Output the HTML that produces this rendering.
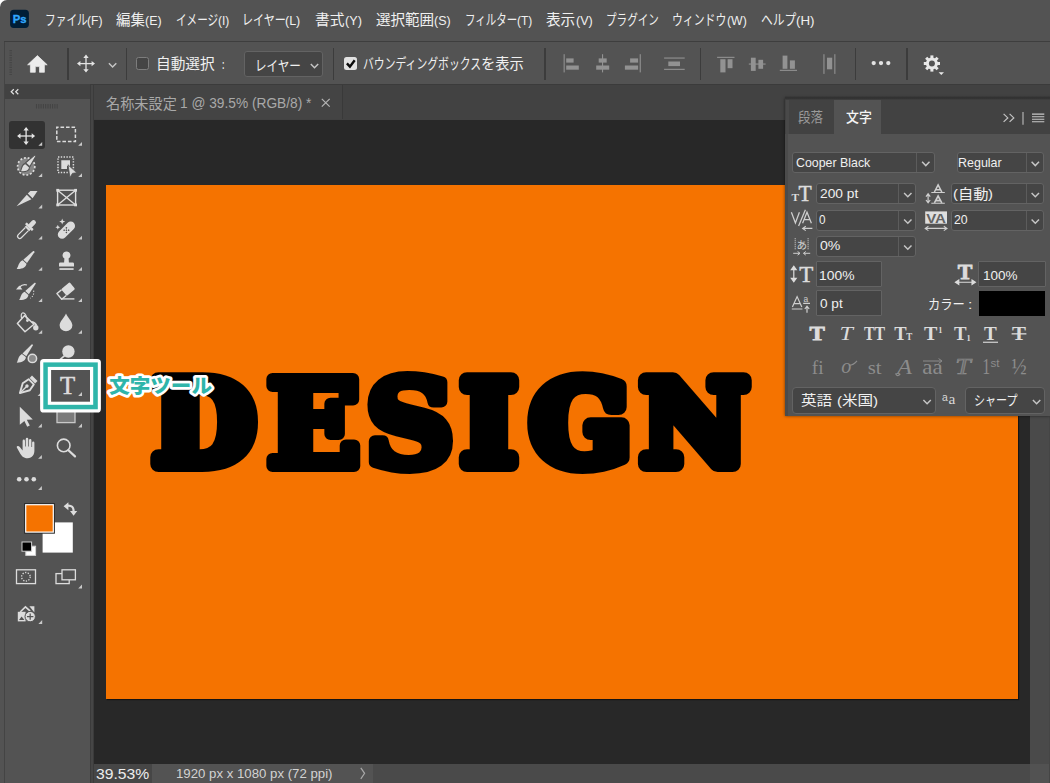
<!DOCTYPE html>
<html lang="ja">
<head>
<meta charset="utf-8">
<title>Photoshop 文字ツール</title>
<style>
*{box-sizing:border-box;margin:0;padding:0}
html,body{width:1050px;height:783px;overflow:hidden;background:#fff}
body{position:relative;font-family:"Liberation Sans","Noto Sans CJK JP",sans-serif;color:#e6e6e6;font-size:13px}
#win{position:absolute;left:0;top:0;width:1050px;height:783px;background:#535353;border-top-left-radius:7px;overflow:hidden}
#win div{position:absolute}
.t{position:absolute;white-space:nowrap;transform-origin:0 50%;display:block}
#optline{left:4px;top:41px;width:1046px;height:1px;background:#3e3e3e}
#optbar{left:5px;top:42px;width:1045px;height:42.5px;background:#535353}
.vsep{width:1.2px;background:#3c3c3c;top:48px;height:31.7px}
#tabbar{left:90px;top:84px;width:960px;height:36px;background:#424242}
#doctab{left:93.6px;top:85.4px;width:249px;height:34px;background:#444;border-right:1.2px solid #393939}
#canvas{left:93px;top:120px;width:937px;height:644px;background:#282828}
#art{left:106px;top:185px;width:912px;height:514px;background:#f57300;box-shadow:1px 1px 1px #141414}
#vscroll{left:1030px;top:120px;width:20px;height:663px;background:#4a4a4a}
#status{left:93px;top:764px;width:937px;height:19px;background:#4a4a4a}
#stzoom{left:93px;top:764px;width:59px;height:19px;background:#464646}
#stinfo{left:152px;top:764px;width:221px;height:19px;background:#535353}
#leftedge{left:4px;top:42px;width:1px;height:741px;background:#444}
#toolhdr{left:5px;top:84px;width:85px;height:15px;background:#424242}
#tools{left:5px;top:99px;width:85px;height:684px;background:#535353}
#toolgap{left:90px;top:85px;width:3.6px;height:698px;background:#464646;border-left:1px solid #3b3b3b;border-right:.9px solid #3b3b3b}
#toolsel{left:9px;top:121px;width:36px;height:28px;background:#323232;border-radius:3px}
#panel{left:785px;top:98px;width:265px;height:318px;background:#535353;box-shadow:0 0 3px rgba(0,0,0,.55)}
#ptabs{left:785px;top:98px;width:265px;height:36px;background:#424242}
#ptab{left:834px;top:98px;width:47px;height:37px;background:#535353}
#pedge{left:785px;top:134px;width:3px;height:282px;background:#4b4b4b}
.fld{background:#454545;border:1px solid #636363;border-radius:3px}
.fdiv{width:1px;background:#5c5c5c}
.cb{left:136px;top:57px;width:13px;height:13px;border:1px solid #7d7d7d;border-radius:2.5px;background:#454545}
.cbc{left:344px;top:57px;width:13px;height:13px;border-radius:2.5px;background:#e2e2e2}
#hl1{left:40px;top:359px;width:61px;height:53.5px;background:#fff;border-radius:3.5px}
#hl2{left:43.3px;top:362.4px;width:54.5px;height:47px;background:#2fb5aa}
#hl3{left:47.8px;top:366.9px;width:45.4px;height:38px;background:#fff}
#hl4{left:51px;top:370px;width:39px;height:31.7px;background:#535353}
svg{position:absolute;left:0;top:0}
</style>
</head>
<body>
<div id="win">
<div id="optline"></div>
<div id="optbar"></div>
<div id="tabbar"></div>
<div id="doctab"></div>
<div style="left:90px;top:84.4px;width:960px;height:1.1px;background:#3b3b3b"></div>
<div id="canvas"></div>
<div id="art"></div>
<div id="vscroll"></div>
<div id="status"></div>
<div id="stzoom"></div>
<div id="stinfo"></div>
<div style="left:1030px;top:764px;width:19px;height:19px;background:#525252"></div>
<div style="left:1049px;top:120px;width:1px;height:663px;background:#454545"></div>
<div id="leftedge"></div>
<div id="toolhdr"></div>
<div id="tools"></div>
<div id="toolgap"></div>
<div id="toolsel"></div>
<div class="vsep" style="left:67.4px"></div>
<div class="vsep" style="left:125.7px"></div>
<div class="vsep" style="left:332.8px"></div>
<div class="vsep" style="left:544.4px"></div>
<div class="vsep" style="left:699.8px"></div>
<div class="vsep" style="left:854.7px"></div>
<div class="vsep" style="left:906.4px"></div>
<div class="cb"></div>
<div class="cbc"></div>
<div class="fld" style="left:244px;top:51px;width:79px;height:26px"></div>
<style>.t{position:absolute;white-space:nowrap;display:block;height:22px;line-height:22px}.r{display:inline-block;white-space:pre;vertical-align:baseline}.r>span{display:inline-block;transform-origin:0 50%;white-space:pre}</style><div id="panel"></div>
<div id="ptabs"></div>
<div id="ptab"></div>
<div id="pedge"></div>
<div style="left:785px;top:96.4px;width:265px;height:3.6px;background:linear-gradient(#3e3e3e,#313131 40%,#343434 65%,#424242)"></div>
<div style="left:786px;top:100px;width:2.8px;height:34px;background:#494949"></div>
<div class="fld" style="left:791.5px;top:151.5px;width:143px;height:21px"></div>
<div class="fdiv" style="left:916px;top:152.5px;height:19px"></div>
<div class="fld" style="left:957px;top:151.5px;width:86.5px;height:21px"></div>
<div class="fdiv" style="left:1025.5px;top:152.5px;height:19px"></div>
<div class="fld" style="left:816px;top:183px;width:100px;height:21px"></div>
<div class="fdiv" style="left:898px;top:184px;height:19px"></div>
<div class="fld" style="left:951px;top:183px;width:92.5px;height:21px"></div>
<div class="fdiv" style="left:1025.5px;top:184px;height:19px"></div>
<div class="fld" style="left:816px;top:209.5px;width:100px;height:21px"></div>
<div class="fdiv" style="left:898px;top:210.5px;height:19px"></div>
<div class="fld" style="left:951px;top:209.5px;width:92.5px;height:21px"></div>
<div class="fdiv" style="left:1025.5px;top:210.5px;height:19px"></div>
<div class="fld" style="left:816px;top:235.5px;width:100px;height:21px"></div>
<div class="fdiv" style="left:898px;top:236.5px;height:19px"></div>
<div class="fld" style="left:815.8px;top:261.3px;width:66.4px;height:26px;border-radius:1px;border-width:1.2px"></div>
<div class="fld" style="left:978.4px;top:261.3px;width:67.2px;height:26px;border-radius:1px;border-width:1.2px"></div>
<div class="fld" style="left:815.8px;top:290.4px;width:66.4px;height:25.4px;border-radius:1px;border-width:1.2px"></div>
<div style="left:979px;top:291px;width:66px;height:24.5px;background:#000"></div>
<div class="fld" style="left:791.5px;top:386.5px;width:144px;height:27px;border-radius:4px"></div>
<div class="fld" style="left:964.5px;top:386.5px;width:80px;height:27px;border-radius:4px"></div>
<span class="t" style="left:44.60px;top:9.1px;font-size:14.4px;color:#f0f0f0;"><span class="r" style="width:42.79px;position:relative;top:.3px;"><span style="transform:scaleX(0.7431)">ファイル</span></span><span class="r" style="width:15.46px;font-size:0.86em;"><span style="transform:scaleX(0.9778)">(F)</span></span></span>
<span class="t" style="left:116.40px;top:9.1px;font-size:14.4px;color:#f0f0f0;"><span class="r" style="width:28.87px;position:relative;top:.3px;"><span style="transform:scaleX(1.0025)">編集</span></span><span class="r" style="width:16.54px;font-size:0.86em;"><span style="transform:scaleX(1.0025)">(E)</span></span></span>
<span class="t" style="left:175.70px;top:9.1px;font-size:14.4px;color:#f0f0f0;"><span class="r" style="width:42.11px;position:relative;top:.3px;"><span style="transform:scaleX(0.7351)">イメージ</span></span><span class="r" style="width:11.30px;font-size:0.86em;"><span style="transform:scaleX(0.9672)">(I)</span></span></span>
<span class="t" style="left:241.60px;top:9.1px;font-size:14.4px;color:#f0f0f0;"><span class="r" style="width:43.86px;position:relative;top:.3px;"><span style="transform:scaleX(0.7675)">レイヤー</span></span><span class="r" style="width:15.27px;font-size:0.86em;"><span style="transform:scaleX(1.0099)">(L)</span></span></span>
<span class="t" style="left:315.30px;top:9.1px;font-size:14.4px;color:#f0f0f0;"><span class="r" style="width:29.54px;position:relative;top:.3px;"><span style="transform:scaleX(1.0259)">書式</span></span><span class="r" style="width:16.93px;font-size:0.86em;"><span style="transform:scaleX(1.0259)">(Y)</span></span></span>
<span class="t" style="left:376.20px;top:9.1px;font-size:14.4px;color:#f0f0f0;"><span class="r" style="width:58.15px;position:relative;top:.3px;"><span style="transform:scaleX(1.0099)">選択範囲</span></span><span class="r" style="width:16.66px;font-size:0.86em;"><span style="transform:scaleX(1.0099)">(S)</span></span></span>
<span class="t" style="left:464.55px;top:9.1px;font-size:14.4px;color:#f0f0f0;"><span class="r" style="width:52.32px;position:relative;top:.3px;"><span style="transform:scaleX(0.7300)">フィルター</span></span><span class="r" style="width:15.19px;font-size:0.86em;"><span style="transform:scaleX(0.9606)">(T)</span></span></span>
<span class="t" style="left:546.30px;top:9.1px;font-size:14.4px;color:#f0f0f0;"><span class="r" style="width:29.26px;position:relative;top:.3px;"><span style="transform:scaleX(1.0160)">表示</span></span><span class="r" style="width:16.76px;font-size:0.86em;"><span style="transform:scaleX(1.0160)">(V)</span></span></span>
<span class="t" style="left:605.70px;top:9.1px;font-size:14.4px;color:#f0f0f0;"><span class="r" style="width:52.84px;position:relative;top:.3px;"><span style="transform:scaleX(0.7342)">プラグイン</span></span></span>
<span class="t" style="left:672.25px;top:9.1px;font-size:14.4px;color:#f0f0f0;"><span class="r" style="width:54.32px;position:relative;top:.3px;"><span style="transform:scaleX(0.7548)">ウィンドウ</span></span><span class="r" style="width:19.80px;font-size:0.86em;"><span style="transform:scaleX(0.9931)">(W)</span></span></span>
<span class="t" style="left:760.75px;top:9.1px;font-size:14.4px;color:#f0f0f0;"><span class="r" style="width:35.40px;position:relative;top:.3px;"><span style="transform:scaleX(0.8198)">ヘルプ</span></span><span class="r" style="width:18.54px;font-size:0.86em;"><span style="transform:scaleX(1.0786)">(H)</span></span></span>
<span class="t" style="left:156.10px;top:53.0px;font-size:14.4px;color:#f0f0f0;"><span class="r" style="width:58.70px;position:relative;top:.3px;"><span style="transform:scaleX(1.0195)">自動選択</span></span></span>
<span class="t" style="left:221.65px;top:53.0px;font-size:14.4px;color:#f0f0f0;font-weight:700;"><span class="r" style="width:2.46px;font-size:0.9em;"><span style="transform:scaleX(0.5676)">:</span></span></span>
<span class="t" style="left:254.60px;top:54.4px;font-size:14.4px;color:#f0f0f0;"><span class="r" style="width:45.94px;position:relative;top:.3px;"><span style="transform:scaleX(0.8040)">レイヤー</span></span></span>
<span class="t" style="left:363.35px;top:53.0px;font-size:14.4px;color:#f0f0f0;"><span class="r" style="width:118.12px;position:relative;top:.3px;"><span style="transform:scaleX(0.7530)">バウンディングボックス</span></span><span class="r" style="width:42.79px;position:relative;top:.3px;"><span style="transform:scaleX(0.9908)">を表示</span></span></span>
<span class="t" style="left:105.50px;top:92.4px;font-size:14.4px;color:#a9a9a9;"><span class="r" style="width:74.74px;position:relative;top:.3px;"><span style="transform:scaleX(0.9840)">名称未設定 </span></span><span class="r" style="width:131.46px;font-size:0.97em;"><span style="transform:scaleX(0.9840)">1 @ 39.5% (RGB/8) *</span></span></span>
<span class="t" style="left:96.40px;top:763.0px;font-size:16px;color:#ececec;"><span class="r" style="width:53.23px;font-size:0.97em;"><span style="transform:scaleX(1.0115)">39.53%</span></span></span>
<span class="t" style="left:175.75px;top:763.0px;font-size:13.6px;color:#d2d2d2;"><span class="r" style="width:156.52px;font-size:0.97em;"><span style="transform:scaleX(1.0022)">1920 px x 1080 px (72 ppi)</span></span></span>
<span class="t" style="left:797.60px;top:106.4px;font-size:13.8px;color:#9a9a9a;"><span class="r" style="width:25.00px;position:relative;top:.3px;"><span style="transform:scaleX(0.9060)">段落</span></span></span>
<span class="t" style="left:846.00px;top:106.4px;font-size:13.8px;color:#f4f4f4;font-weight:500;"><span class="r" style="width:25.81px;position:relative;top:.3px;"><span style="transform:scaleX(0.9354)">文字</span></span></span>
<span class="t" style="left:795.75px;top:151.5px;font-size:13.6px;color:#f0f0f0;"><span class="r" style="width:74.30px;font-size:0.97em;"><span style="transform:scaleX(0.9385)">Cooper Black</span></span></span>
<span class="t" style="left:958.35px;top:151.5px;font-size:13.6px;color:#f0f0f0;"><span class="r" style="width:43.72px;font-size:0.97em;"><span style="transform:scaleX(0.9465)">Regular</span></span></span>
<span class="t" style="left:820.25px;top:183.1px;font-size:13.6px;color:#f0f0f0;"><span class="r" style="width:38.30px;font-size:0.97em;"><span style="transform:scaleX(1.0444)">200 pt</span></span></span>
<span class="t" style="left:952.95px;top:183.4px;font-size:13.6px;color:#f0f0f0;"><span class="r" style="width:4.94px;font-size:0.97em;"><span style="transform:scaleX(1.1222)">(</span></span><span class="r" style="width:30.51px;position:relative;top:.3px;"><span style="transform:scaleX(1.1222)">自動</span></span><span class="r" style="width:4.94px;font-size:0.97em;"><span style="transform:scaleX(1.1222)">)</span></span></span>
<span class="t" style="left:819.25px;top:209.1px;font-size:13.6px;color:#f0f0f0;"><span class="r" style="width:6.54px;font-size:0.97em;"><span style="transform:scaleX(0.8904)">0</span></span></span>
<span class="t" style="left:954.15px;top:209.1px;font-size:13.6px;color:#f0f0f0;"><span class="r" style="width:13.70px;font-size:0.97em;"><span style="transform:scaleX(0.9339)">20</span></span></span>
<span class="t" style="left:819.80px;top:235.3px;font-size:13.6px;color:#f0f0f0;"><span class="r" style="width:20.43px;font-size:0.97em;"><span style="transform:scaleX(1.0716)">0%</span></span></span>
<span class="t" style="left:819.30px;top:264.6px;font-size:13.6px;color:#f0f0f0;"><span class="r" style="width:35.46px;font-size:0.97em;"><span style="transform:scaleX(1.0511)">100%</span></span></span>
<span class="t" style="left:983.35px;top:264.6px;font-size:13.6px;color:#f0f0f0;"><span class="r" style="width:34.55px;font-size:0.97em;"><span style="transform:scaleX(1.0243)">100%</span></span></span>
<span class="t" style="left:820.45px;top:293.0px;font-size:13.6px;color:#f0f0f0;"><span class="r" style="width:22.70px;font-size:0.97em;"><span style="transform:scaleX(1.0319)">0 pt</span></span></span>
<span class="t" style="left:928.15px;top:293.5px;font-size:13.6px;color:#f0f0f0;"><span class="r" style="width:40.27px;position:relative;top:.3px;"><span style="transform:scaleX(0.9036)">カラー </span></span><span class="r" style="width:4.37px;font-size:0.97em;"><span style="transform:scaleX(1.1889)">:</span></span></span>
<span class="t" style="left:801.30px;top:389.9px;font-size:13.6px;color:#f0f0f0;"><span class="r" style="width:35.55px;position:relative;top:.3px;"><span style="transform:scaleX(1.1480)">英語 </span></span><span class="r" style="width:5.06px;font-size:0.97em;"><span style="transform:scaleX(1.1480)">(</span></span><span class="r" style="width:31.21px;position:relative;top:.3px;"><span style="transform:scaleX(1.1480)">米国</span></span><span class="r" style="width:5.06px;font-size:0.97em;"><span style="transform:scaleX(1.1480)">)</span></span></span>
<span class="t" style="left:973.85px;top:389.9px;font-size:13.6px;color:#f0f0f0;"><span class="r" style="width:43.52px;position:relative;top:.3px;"><span style="transform:scaleX(0.8125)">シャープ</span></span></span>
<svg width="1050" height="783" viewBox="0 0 1050 783">
<defs>
<path id="tri" d="M0 3.8 L3.8 0 L3.8 3.8 Z" fill="#c9c9c9"/>
<g id="mv" fill="#e4e4e4" stroke="none">
<rect x="-6.5" y="-0.65" width="13" height="1.3"/><rect x="-0.65" y="-6.5" width="1.3" height="13"/>
<path d="M-9 0 L-5.6 -2.7 L-5.6 2.7Z M9 0 L5.6 -2.7 L5.6 2.7Z M0 -9 L-2.7 -5.6 L2.7 -5.6Z M0 9 L-2.7 5.6 L2.7 5.6Z"/>
</g>
<path id="chev" d="M-3.7 -2 L0 1.8 L3.7 -2" fill="none" stroke="#c6c6c6" stroke-width="1.45"/>
</defs>
<!-- Ps logo -->
<rect x="10.1" y="9.7" width="18.8" height="18.2" rx="3.6" fill="#001e36"/>
<text x="12.8" y="23.1" font-family="Liberation Sans, sans-serif" font-weight="700" font-size="11.2" fill="#31a8ff" stroke="#31a8ff" stroke-width=".35" textLength="13.8" lengthAdjust="spacingAndGlyphs">Ps</text>
<!-- options bar grip -->
<path d="M10.7 50 V75" stroke="#464646" stroke-width="2.6" stroke-dasharray="1.2 1.2"/>
<!-- home -->
<path d="M37.4 55.6 L47.2 64.8 L44.4 64.8 L44.4 72.3 L39.5 72.3 L39.5 66.6 L35.3 66.6 L35.3 72.3 L30.4 72.3 L30.4 64.8 L27.6 64.8 Z" fill="#ececec" stroke="#ececec" stroke-width=".7" stroke-linejoin="round"/>
<use href="#mv" x="86" y="63.6"/>
<use href="#chev" x="112.6" y="65.2"/>
<use href="#chev" x="314.5" y="66" />
<!-- check mark -->
<path d="M346.9 63.4 L349.9 66.6 L354.7 60.2" fill="none" stroke="#0a0a0a" stroke-width="2.4"/>
<!-- align icons -->
<g fill="#929292">
<rect x="563.6" y="54.2" width="1.1" height="18.2"/><rect x="566.2" y="58.4" width="7.4" height="4.2"/><rect x="566.2" y="65.5" width="12.6" height="4.2"/>
<rect x="602" y="54.2" width="1.1" height="18.2"/><rect x="598.7" y="58.4" width="8" height="4.2"/><rect x="596.2" y="65.5" width="13" height="4.2"/>
<rect x="639.7" y="54.2" width="1.1" height="18.2"/><rect x="630.1" y="58.4" width="8" height="4.2"/><rect x="624.9" y="65.5" width="13.2" height="4.2"/>
<rect x="664.1" y="57.5" width="20.6" height="1.1"/><rect x="664.1" y="68.8" width="20.6" height="1.1"/><rect x="668.3" y="61.5" width="11.7" height="4.6"/>
<rect x="717.1" y="56.8" width="17.4" height="1.1"/><rect x="720.3" y="59.2" width="5.2" height="13.2"/><rect x="727.6" y="59.2" width="4.9" height="9"/>
<rect x="748.8" y="63.5" width="16.8" height="1.1"/><rect x="750.9" y="57.7" width="4.8" height="13.2"/><rect x="758.4" y="59.8" width="4.7" height="9"/>
<rect x="779.8" y="69.8" width="17.2" height="1.1"/><rect x="782.6" y="55.6" width="4.8" height="13.2"/><rect x="789.9" y="60.4" width="5" height="8.4"/>
<rect x="823.4" y="54.2" width="1.1" height="19.7"/><rect x="834.3" y="54.2" width="1.1" height="19.7"/><rect x="827" y="57.7" width="5.2" height="11.6"/>
</g>
<g fill="#e2e2e2"><circle cx="873.7" cy="63.1" r="2.15"/><circle cx="881" cy="63.1" r="2.15"/><circle cx="888.3" cy="63.1" r="2.15"/></g>
<!-- gear -->
<g transform="translate(931.9 63.5)" fill="#e8e8e8">
<circle r="4.5" fill="none" stroke="#e8e8e8" stroke-width="3"/>
<g id="teeth"><rect x="-1.5" y="-8.1" width="3" height="16.2"/><rect x="-8.1" y="-1.5" width="16.2" height="3"/></g>
<use href="#teeth" transform="rotate(45)"/>
<circle r="3" fill="#535353"/>
</g>
<path d="M938.6 72.2 L944 72.2 L941.3 75Z" fill="#e8e8e8"/>
<!-- tab close -->
<path d="M321.8 98.9 L329.7 106.6 M329.7 98.9 L321.8 106.6" stroke="#b4b4b4" stroke-width="1.25"/>
<!-- tool header -->
<path d="M13.8 89.3 L11.2 91.8 L13.8 94.3 M18.3 89.3 L15.7 91.8 L18.3 94.3" fill="none" stroke="#e0e0e0" stroke-width="1.2"/>
<path d="M36.5 104 V108.6 M38.8 104 V108.6 M41.1 104 V108.6 M43.4 104 V108.6 M45.7 104 V108.6 M48 104 V108.6 M50.3 104 V108.6 M52.6 104 V108.6 M54.9 104 V108.6 M57.2 104 V108.6" stroke="#444" stroke-width="1.1"/>
<!-- status chevron -->
<path d="M360.8 767.8 L364.6 773.3 L360.8 778.8" fill="none" stroke="#a8a8a8" stroke-width="1.2"/>
<!-- TOOLS -->
<defs><g id="br"><path d="M-0.8 0.7 Q0 -0.5 0.8 0.7 L2.5 13.7 L-2.5 13.7 Z"/><path d="M-2.6 14.6 L2.6 14.6 C4.6 17.2 3.4 21.4 -1.2 25 C-1.6 21.6 -4.4 19 -2.6 14.6 Z"/></g></defs>

<g fill="#dcdcdc" stroke="none">
<use href="#mv" x="26.1" y="136"/>
<use href="#tri" x="38.4" y="142"/>
<!-- marquee -->
<rect x="56.8" y="127.3" width="18.6" height="14.2" fill="none" stroke="#dcdcdc" stroke-width="1.5" stroke-dasharray="3.6 1.9" stroke-dashoffset="1.8"/>
<use href="#tri" x="78.2" y="142"/>
<!-- quick selection -->
<circle cx="26.2" cy="166.4" r="8.6" fill="#858585" stroke="#dcdcdc" stroke-width="1.7" stroke-dasharray="1.9 1.9"/>
<use href="#br" transform="translate(35.4 155.4) rotate(39.5) scale(1.12 .88)" stroke="#535353" stroke-width="1"/>
<use href="#tri" x="38.4" y="173.2"/>
<!-- object selection -->
<rect x="58" y="157" width="15.4" height="15.4" fill="none" stroke="#dcdcdc" stroke-width="1.5" stroke-dasharray="1.4 1.4"/>
<path d="M61.3 160.3 H70 V166 H67 V169 H61.3Z"/>
<path d="M68 164.8 L76.8 172.8 L72.5 173.3 L70 177.6 Z" stroke="#535353" stroke-width="0.8"/>
<use href="#tri" x="78.2" y="173.2"/>
<!-- slice -->
<path d="M16.6 206.2 L26.8 194.8 L31.4 199.2 Z"/>
<path d="M27.8 193.6 L30.4 191 L37.5 191 L32.6 198.2 Z"/>
<use href="#tri" x="38.4" y="204.6"/>
<!-- frame -->
<g fill="none" stroke="#dcdcdc" stroke-width="1.4"><rect x="57.6" y="190.2" width="18" height="14.8"/><path d="M57.6 190.2 L75.6 205 M75.6 190.2 L57.6 205"/></g>
<rect x="56.3" y="188.9" width="2.8" height="2.8"/><rect x="74.2" y="188.9" width="2.8" height="2.8"/><rect x="56.3" y="203.5" width="2.8" height="2.8"/><rect x="74.2" y="203.5" width="2.8" height="2.8"/>
<!-- eyedropper -->
<g transform="translate(26.6 229.4) rotate(45) scale(.94)"><rect x="-2.5" y="-13" width="5" height="9" rx="2.5"/><rect x="-5.2" y="-5.4" width="10.4" height="2.7" rx=".6"/><rect x="-3.3" y="-2.7" width="6.6" height="2.2"/><path d="M-2.3 -0.5 V10.2 Q-2.3 12.6 0 12.6 Q2.3 12.6 2.3 10.2 V-0.5" fill="none" stroke="#dcdcdc" stroke-width="1.3"/></g>
<use href="#tri" x="38.4" y="235.8"/>
<!-- healing -->
<g transform="translate(66.4 230.2) rotate(-45)"><rect x="-10.4" y="-4.3" width="20.8" height="8.6" rx="4.3"/><g fill="#535353"><circle cx="-1.6" cy="-1.6" r=".8"/><circle cx="1.6" cy="-1.6" r=".8"/><circle cx="-1.6" cy="1.6" r=".8"/><circle cx="1.6" cy="1.6" r=".8"/><circle cx="0" cy="0" r=".8"/></g></g>
<path d="M62.2 218.6 L63 220.8 L65.2 221.6 L63 222.4 L62.2 224.6 L61.4 222.4 L59.2 221.6 L61.4 220.8Z M57.8 224.8 L58.5 226.5 L60.2 227.2 L58.5 227.9 L57.8 229.6 L57.1 227.9 L55.4 227.2 L57.1 226.5Z"/>
<use href="#tri" x="78.2" y="235.8"/>
<!-- brush -->
<use href="#br" transform="translate(34.3 251.1) rotate(41.9)"/>
<use href="#tri" x="38.4" y="267"/>
<!-- stamp -->
<path d="M66.5 251.4 A3.9 3.9 0 0 1 68.6 258.6 L68.9 262.4 H72.6 Q74 262.4 74 263.8 V266.4 H59 V263.8 Q59 262.4 60.4 262.4 H64.1 L64.4 258.6 A3.9 3.9 0 0 1 66.5 251.4Z"/>
<rect x="59.4" y="268.2" width="14.2" height="1.7"/>
<use href="#tri" x="78.2" y="267"/>
<!-- history brush -->
<use href="#br" transform="translate(35.6 282.8) rotate(41) scale(.95)"/>
<path d="M16 289.6 L19.4 285.4 L22.4 289.6 Z"/>
<path d="M19.6 287 Q22.6 283.8 27 285" fill="none" stroke="#dcdcdc" stroke-width="1.2"/>
<path d="M33.6 290.6 Q34.6 295.4 30.2 298.2" fill="none" stroke="#dcdcdc" stroke-width="1.1" stroke-dasharray="1.2 1.6"/>
<use href="#tri" x="38.4" y="298.2"/>
<!-- eraser -->
<g transform="translate(65.6 291.2) rotate(-40)"><rect x="-2.2" y="-4.4" width="11" height="8.8" rx="1.2"/><path d="M-2.2 -3.7 H-8.2 V3.7 H-2.2" fill="none" stroke="#dcdcdc" stroke-width="1.4" stroke-linejoin="round"/></g>
<path d="M61.6 298.9 H74.4" fill="none" stroke="#dcdcdc" stroke-width="1.4"/>
<use href="#tri" x="78.2" y="298.2"/>
<!-- paint bucket -->
<path d="M24.6 315.6 L34 324.2 L25 331.8 L17.4 323.6 Z" fill="none" stroke="#dcdcdc" stroke-width="1.5" stroke-linejoin="round"/>
<path d="M21.6 318.4 Q20.4 313.6 23 312.8 Q25.6 312.6 27.4 319.6" fill="none" stroke="#dcdcdc" stroke-width="1.2"/>
<circle cx="27.4" cy="320.6" r="1.4"/>
<path d="M31.6 321.8 Q35.4 322.6 36.6 325.6" fill="none" stroke="#dcdcdc" stroke-width="1.6"/><circle cx="35.8" cy="327.8" r="2.7"/>
<use href="#tri" x="38.4" y="330"/>
<!-- drop -->
<path d="M66 313.4 C68 318 72.4 321.4 72.4 325.2 A6.4 6 0 0 1 59.6 325.2 C59.6 321.4 64 318 66 313.4Z"/>
<use href="#tri" x="78.2" y="330"/>
<!-- mixer brush -->
<use href="#br" transform="translate(32.6 344.4) rotate(38) scale(.97)"/>
<circle cx="32.4" cy="358.4" r="4.2" fill="#8a8a8a" stroke="#dcdcdc" stroke-width="1.5"/>
<!-- dodge -->
<circle cx="68.4" cy="351.5" r="6.2"/>
<path d="M64.6 355.6 L60 359.6" stroke="#dcdcdc" stroke-width="1.7"/>
<!-- pen -->
<g transform="translate(27.4 385.6) rotate(45)">
<path d="M-3.9 -10.4 H3.9 V-7 H-3.9Z"/>
<path d="M-3.7 -5.4 H3.7 L5 1.6 L0 10.6 L-5 1.6 Z" fill="none" stroke="#dcdcdc" stroke-width="1.9" stroke-linejoin="round"/>
<path d="M0 10.4 V1.6" stroke="#dcdcdc" stroke-width="1.3"/><circle cx="0" cy="0.6" r="1.7"/>
</g>
<use href="#tri" x="37.6" y="392.1"/>
<use href="#tri" x="78.2" y="392.1"/>
<!-- path select -->
<path d="M19.8 406.8 L32.8 419.4 L26.8 419.8 L29.8 425.6 L27.2 426.8 L24.4 421 L19.8 424.8 Z"/>
<use href="#tri" x="38.1" y="423.6"/>
<!-- rectangle -->
<rect x="57" y="406" width="18" height="16.6" fill="#7b7b7b" stroke="#c8c8c8" stroke-width="1.3"/>
<use href="#tri" x="78.2" y="423.6"/>
<!-- hand -->
<path d="M22.6 441 Q22.6 439.6 23.8 439.6 Q25 439.6 25 441 V446.4 H25.7 V439.2 Q25.7 437.8 27 437.8 Q28.3 437.8 28.3 439.2 V446.4 H29 V440.2 Q29 438.9 30.2 438.9 Q31.4 438.9 31.4 440.2 V447 H32.1 V442.8 Q32.1 441.6 33.2 441.6 Q34.4 441.6 34.4 442.8 V450.6 C34.4 454.6 32.4 458.2 27.6 458.2 C23.4 458.2 21.4 455.8 19.6 452.4 L16.8 447.6 Q16.4 446.4 17.6 446 Q18.8 445.8 19.8 447 L22.6 450.4 Z"/>
<use href="#tri" x="38.1" y="455"/>
<!-- zoom -->
<circle cx="63.7" cy="445.4" r="6.3" fill="none" stroke="#dcdcdc" stroke-width="1.6"/>
<path d="M68.4 450.2 L75 456.4" stroke="#dcdcdc" stroke-width="2.2" stroke-linecap="round"/>
<!-- dots -->
<circle cx="19.2" cy="479.2" r="2.3"/><circle cx="26.5" cy="479.2" r="2.3"/><circle cx="33.8" cy="479.2" r="2.3"/>
<use href="#tri" x="38.1" y="486.1"/>
</g>
<!-- swatches -->
<rect x="42.6" y="522.4" width="30.2" height="30.2" fill="#fff"/>
<rect x="24.1" y="503.1" width="30.8" height="30.6" fill="#2b2b2b"/>
<rect x="25.1" y="504.1" width="28.8" height="28.6" fill="#fff"/>
<rect x="26.3" y="505.3" width="26.4" height="26.2" fill="#f57300"/>
<!-- swap -->
<path d="M67.4 505.6 Q73.8 505 73.6 511.6" fill="none" stroke="#dcdcdc" stroke-width="2.2"/>
<path d="M63.6 506.2 L68.4 502.2 L68.4 510.2Z M70 511 L77.2 511 L73.6 515.8Z" fill="#dcdcdc"/>
<!-- default colors -->
<rect x="25.8" y="546.2" width="9.8" height="9.2" fill="#fff" stroke="#d0d0d0" stroke-width="1"/>
<rect x="22" y="542" width="9.6" height="9.2" fill="#000" stroke="#d0d0d0" stroke-width="1"/>
<!-- quick mask -->
<rect x="16.5" y="569.8" width="19" height="13.8" fill="none" stroke="#dcdcdc" stroke-width="1.3"/>
<circle cx="25.9" cy="576.8" r="4.3" fill="none" stroke="#dcdcdc" stroke-width="1.3" stroke-dasharray="1.3 1.4"/>
<!-- screen mode -->
<rect x="56" y="573.6" width="13.2" height="10" fill="#535353" stroke="#dcdcdc" stroke-width="1.3"/>
<rect x="62" y="569.8" width="13.4" height="10" fill="#535353" stroke="#dcdcdc" stroke-width="1.3"/>
<use href="#tri" x="78.2" y="584.6"/>
<!-- generate image -->
<g fill="#dcdcdc">
<path d="M19.6 611.4 L25.4 605.8 L30.8 610.6 L29.4 611.6 L25.4 608 L21 612.2Z"/>
<path d="M29.4 606.2 H34.4 V612.6 Z"/>
<path d="M17.8 611.8 H25.6 V621.4 H17.8Z"/>
<circle cx="30.2" cy="616.6" r="5.2" stroke="#535353" stroke-width="1"/>
<path d="M27 616.6 H33.4 M30.2 613.4 V619.8" stroke="#535353" stroke-width="1.2"/>
<path d="M19 620 L21.6 616.4 L24.4 620Z" fill="#535353"/>
</g>
<use href="#tri" x="38.4" y="620.1"/>
<!-- PANEL ICONS -->
<g fill="none" stroke="#c4c4c4" stroke-width="1.2">
<path d="M1003.6 113.9 L1007.8 117.9 L1003.6 121.9 M1009.6 113.9 L1013.8 117.9 L1009.6 121.9"/>
<path d="M1023 112 V124.8" stroke="#bdbdbd" stroke-width="1.1"/>
<path d="M1032 114.1 H1044.3 M1032 116.7 H1044.3 M1032 119.3 H1044.3 M1032 121.7 H1044.3" stroke="#c9c9c9" stroke-width="1.1"/>
</g>
<use href="#chev" x="925.8" y="163.8"/><use href="#chev" x="1035.3" y="163.8"/>
<use href="#chev" x="907.8" y="195"/><use href="#chev" x="1035.3" y="195"/>
<use href="#chev" x="907.8" y="221.5"/><use href="#chev" x="1035.3" y="221.5"/>
<use href="#chev" x="907.8" y="247.5"/>
<use href="#chev" x="927.1" y="402"/><use href="#chev" x="1036.6" y="402"/>
<g font-family="Liberation Serif, serif" fill="#dcdcdc">
<!-- size icon -->
<text x="791.4" y="200.6" font-size="10" font-weight="700" textLength="7.6" lengthAdjust="spacingAndGlyphs">T</text>
<text x="798.4" y="200.6" font-size="23.4" textLength="13.2" lengthAdjust="spacingAndGlyphs" stroke="#dcdcdc" stroke-width=".5">T</text>
<!-- vertical scale -->
<text x="799.2" y="281.8" font-size="23.4" textLength="14" lengthAdjust="spacingAndGlyphs" stroke="#dcdcdc" stroke-width=".5">T</text>
<!-- horizontal scale -->
<text x="957.8" y="279.4" font-size="21" font-weight="700" textLength="14.6" lengthAdjust="spacingAndGlyphs" stroke="#dcdcdc" stroke-width=".9">T</text>
<!-- style row -->
<g font-weight="700" font-size="19.2">
<text x="809.6" y="339.7" textLength="15.4" lengthAdjust="spacingAndGlyphs" stroke="#dcdcdc" stroke-width=".8">T</text>
<text x="839.6" y="339.7" font-style="italic" font-weight="400" textLength="13.4" lengthAdjust="spacingAndGlyphs">T</text>
<text x="864" y="339.7" textLength="21.2" lengthAdjust="spacingAndGlyphs">TT</text>
<text x="894.2" y="339.7" textLength="12.4" lengthAdjust="spacingAndGlyphs">T</text>
<text x="906.2" y="339.7" font-size="11" textLength="6" lengthAdjust="spacingAndGlyphs">T</text>
<text x="924" y="339.7" textLength="13.4" lengthAdjust="spacingAndGlyphs">T</text>
<text x="938.2" y="333" font-size="8.4">1</text>
<text x="954" y="339.7" textLength="12.6" lengthAdjust="spacingAndGlyphs">T</text>
<text x="966.4" y="341" font-size="8.4">1</text>
<text x="984" y="339.7" textLength="12.8" lengthAdjust="spacingAndGlyphs">T</text>
<text x="1012" y="339.7" textLength="14" lengthAdjust="spacingAndGlyphs">T</text>
</g>
<rect x="983" y="341.7" width="15" height="1.1"/>
<rect x="1011.6" y="333.2" width="14.8" height="1.3"/>
</g>
<!-- opentype row (dim) -->
<g font-family="Liberation Serif, serif" fill="#8c8c8c" font-size="19.6">
<text x="811.8" y="374" textLength="11.8" lengthAdjust="spacingAndGlyphs">fi</text>
<text x="841.2" y="373" font-style="italic" font-size="20">o</text>
<path d="M849 365.4 Q853.6 365 857 360.8" fill="none" stroke="#8c8c8c" stroke-width="1.1"/>
<text x="867.8" y="374" textLength="13.8" lengthAdjust="spacingAndGlyphs">st</text>
<text x="897" y="374.4" font-style="italic" font-size="21.4" textLength="15" lengthAdjust="spacingAndGlyphs">A</text>
<path d="M895.6 373.6 Q897.2 377.4 900.2 374" fill="none" stroke="#8c8c8c" stroke-width="1.3"/>
<text x="922.2" y="374" font-size="20.6" textLength="20.4" lengthAdjust="spacingAndGlyphs">aa</text>
<path d="M923 361 H941.6 M938.6 358.6 L942 361 L938.6 363.4" fill="none" stroke="#8c8c8c" stroke-width="1"/>
<text x="955.2" y="374" font-style="italic" font-size="22.6" fill="#6c6c6c" stroke="#8c8c8c" stroke-width=".7" textLength="15.4" lengthAdjust="spacingAndGlyphs">T</text>
<text x="982.2" y="374" font-size="22.4" textLength="8" lengthAdjust="spacingAndGlyphs">1</text>
<text x="990.4" y="367.4" font-size="11.6" font-family="Liberation Sans, sans-serif">st</text>
<text x="1011.6" y="374" font-size="22.4" textLength="15.2" lengthAdjust="spacingAndGlyphs">½</text>
</g>
<!-- leading icon -->
<g fill="none" stroke="#cfcfcf" stroke-width="1.1">
<path d="M928.1 194.6 V202 M926 196.6 L928.1 193.8 L930.2 196.6 M926 200 L928.1 202.8 L930.2 200" stroke-width="1.2"/>
<path d="M931.3 192.5 H944.8 M931.3 203.2 H944.8"/>
<path d="M934.4 192 L938.1 185 L941.8 192 M935.6 189.8 H940.6" stroke-width="1.6"/>
<path d="M934.4 202.8 L938.1 196 L941.8 202.8 M935.6 200.6 H940.6" stroke-width="1.6"/>
</g>
<!-- kerning icon -->
<g fill="none" stroke="#cfcfcf" stroke-width="1.25">
<path d="M791.4 212.2 L795.4 223 L799.4 212.2"/>
<path d="M805.4 209.8 L798.6 226"/>
<path d="M802.6 223.2 L807 212.2 L811.4 223.2 M804.2 219.6 H809.8"/>
<path d="M803 228.4 H812.4 M805.8 226.2 L802.6 228.4 L805.8 230.6" stroke-width="1.1"/>
</g>
<!-- tracking icon -->
<rect x="925.2" y="211.4" width="21.8" height="12.3" fill="#dedede"/>
<text x="926.2" y="222.6" font-family="Liberation Sans, sans-serif" font-weight="700" font-size="13" fill="#626262" textLength="19.8" lengthAdjust="spacingAndGlyphs">VA</text>
<path d="M926 228.4 H946.2 M928.4 226.2 L925.2 228.4 L928.4 230.6 M943.8 226.2 L947 228.4 L943.8 230.6" fill="none" stroke="#cfcfcf" stroke-width="1.1"/>
<!-- tsume icon -->
<text x="796.4" y="248.6" font-family="Noto Sans CJK JP, sans-serif" font-size="10.6" fill="#cfcfcf">あ</text>
<path d="M795.2 238.2 V249.6 M808.1 238.2 V249.6" stroke="#cfcfcf" stroke-width="1.1" stroke-dasharray="1 1"/>
<path d="M793.2 253.3 H799.6 M797.6 251.5 L800 253.3 L797.6 255.1 M810.2 253.3 H803.8 M805.8 251.5 L803.4 253.3 L805.8 255.1" fill="none" stroke="#cfcfcf" stroke-width="1"/>
<!-- vscale arrow -->
<path d="M793.8 268 V280 M791.4 269.6 L793.8 266.2 L796.2 269.6 Z M791.4 278.4 L793.8 281.8 L796.2 278.4 Z" fill="#dcdcdc" stroke="#dcdcdc" stroke-width="1.2"/>
<!-- hscale arrow -->
<path d="M956.6 282.2 H974.2 M958.8 280 L955.4 282.2 L958.8 284.4 Z M972 280 L975.4 282.2 L972 284.4 Z" fill="#dcdcdc" stroke="#dcdcdc" stroke-width="1.1"/>
<!-- baseline icon -->
<g fill="none" stroke="#cfcfcf" stroke-width="1.2">
<path d="M792.4 307 L797.1 296.6 L801.8 307 M794 303.6 H800.2"/>
<path d="M791.8 309 H802.4 M803.2 303.4 H810"/>
<path d="M807 312.8 V307 M804.8 309 L807 306.2 L809.2 309"/>
</g>
<text x="803.6" y="302" font-family="Liberation Sans, sans-serif" font-size="8.4" fill="#cfcfcf">a</text>
<!-- aa icon -->
<text x="942" y="400.6" font-family="Liberation Sans, sans-serif" font-size="10.4" fill="#d8d8d8">a</text>
<text x="948.6" y="404.2" font-family="Liberation Serif, serif" font-size="15.4" fill="#d8d8d8">a</text>
<!-- highlight box -->
<rect x="40.1" y="359.1" width="60.8" height="53.4" rx="3.6" fill="#fff"/>
<rect x="43.3" y="362.4" width="54.5" height="46.9" fill="#2fb5aa"/>
<rect x="47.8" y="366.9" width="45.4" height="37.9" fill="#fff"/>
<rect x="51.1" y="370" width="38.9" height="31.7" fill="#535353"/>
<use href="#tri" x="78.2" y="392.1"/>
<!-- tool T -->
<text x="60" y="393.6" font-family="Liberation Serif, serif" font-size="25.6" fill="#dcdcdc" stroke="#dcdcdc" stroke-width=".55" textLength="15.2" lengthAdjust="spacingAndGlyphs">T</text>
<!-- DESIGN -->
<text aria-label="DESIGN" transform="scale(1.03 1)" font-family="DejaVu Serif, Liberation Serif, serif" font-weight="700" font-size="119.3" fill="#000" stroke="#000" stroke-width="12" stroke-linejoin="round" y="466.4"><tspan x="148.6" y="464.4" font-size="113.9" stroke-width="16">D</tspan><tspan x="259.1" y="466.4">E</tspan><tspan x="354.9" y="466.4">S</tspan><tspan x="448" y="464.4" font-size="113.9" stroke-width="16">I</tspan><tspan x="515" y="464.4" font-size="113.9" stroke-width="16">G</tspan><tspan x="622.4" y="464.4" font-size="113.9" stroke-width="16">N</tspan></text>
<!-- label -->
<text x="109.2" y="392.6" font-family="Noto Sans CJK JP, sans-serif" font-weight="900" font-size="19.6" fill="#2fb5aa" stroke="#fff" stroke-width="5.4" stroke-linejoin="round" paint-order="stroke" textLength="102.8" lengthAdjust="spacingAndGlyphs">文字ツール</text>
</svg>
</div>
</body>
</html>
